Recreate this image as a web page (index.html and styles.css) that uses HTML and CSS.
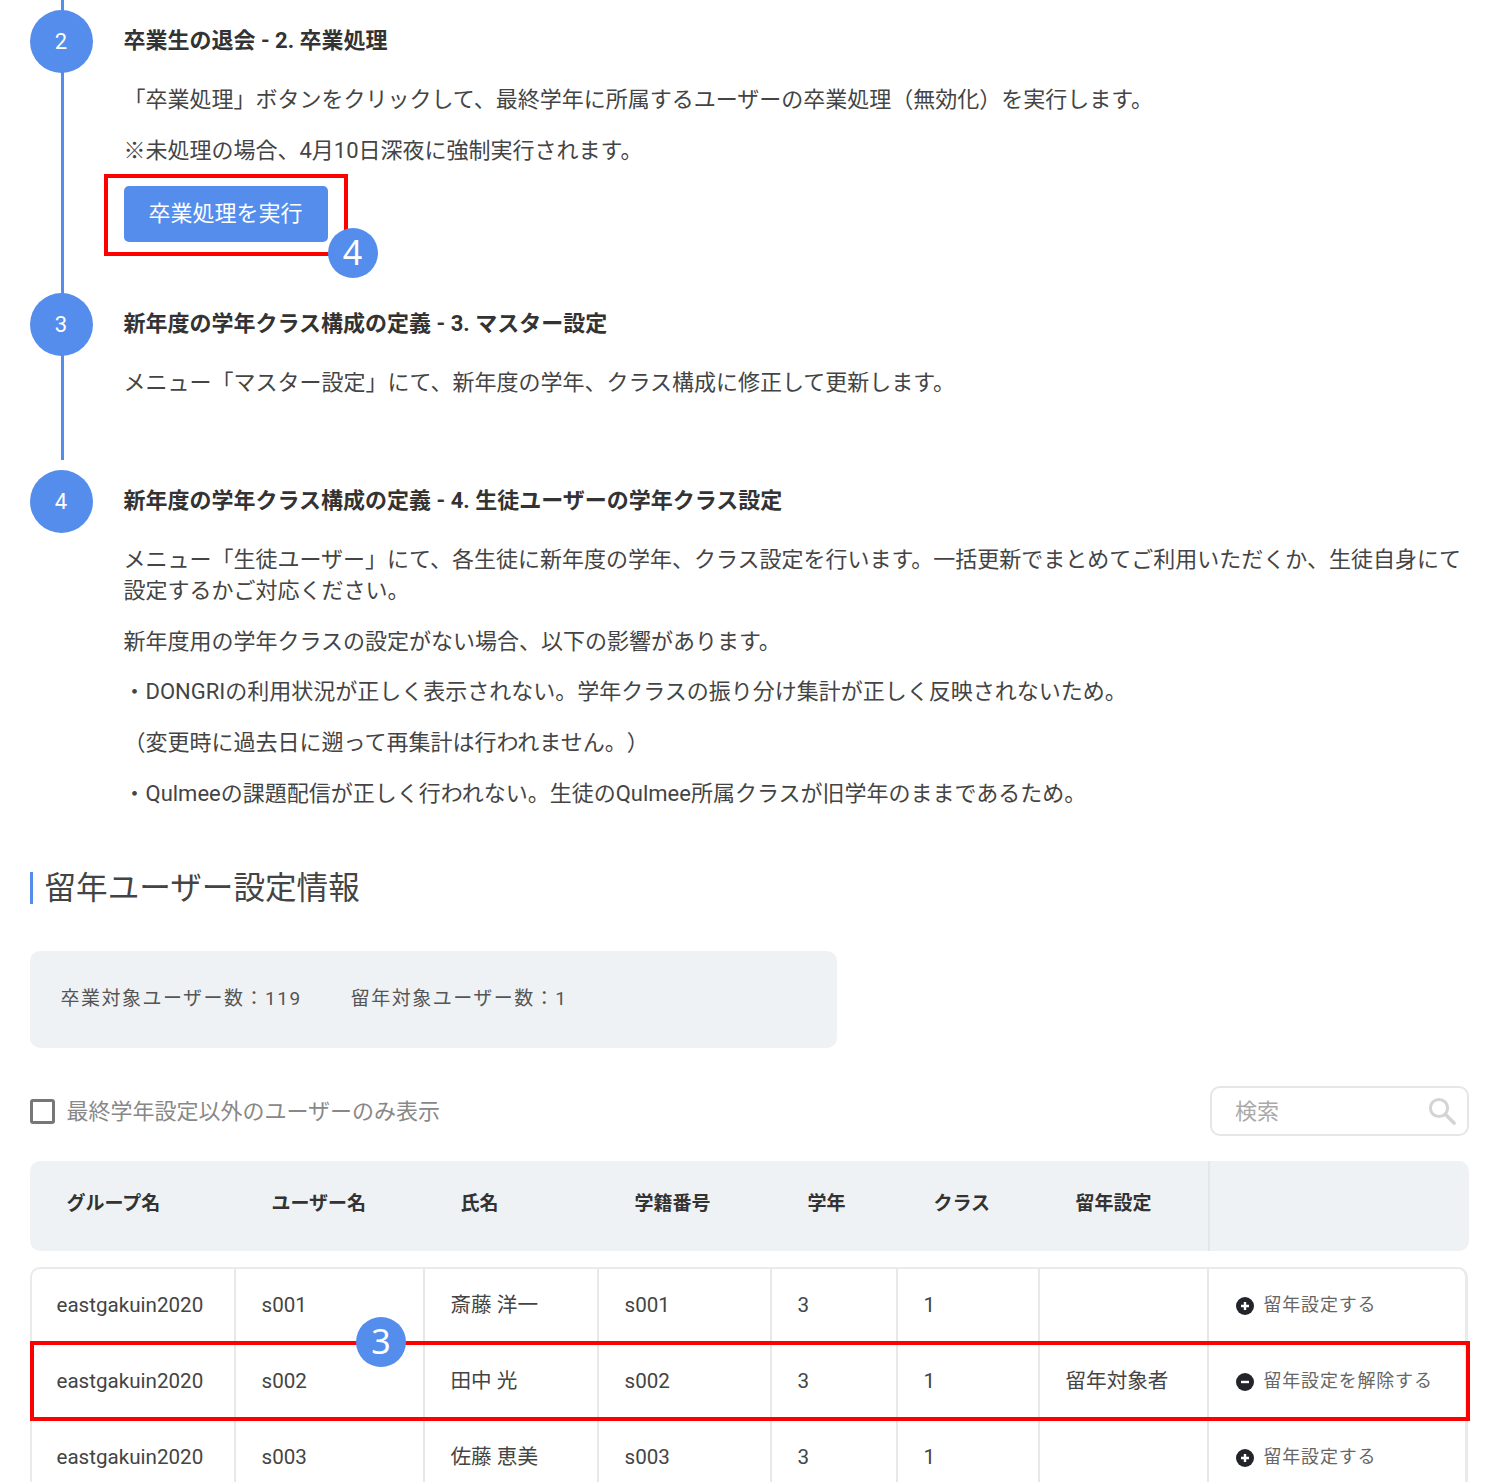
FILE: index.html
```html
<!DOCTYPE html>
<html lang="ja">
<head>
<meta charset="utf-8">
<title>卒業処理</title>
<link rel="stylesheet" href="styles.css">
</head>
<body>
<main class="page">
  <section class="timeline">
    <article class="step step-two">
      <div class="step-num">2</div>
      <div class="step-body">
        <h3 class="step-title">卒業生の退会 - 2. 卒業処理</h3>
        <p class="para">「卒業処理」ボタンをクリックして、最終学年に所属するユーザーの卒業処理（無効化）を実行します。</p>
        <p class="para">※未処理の場合、4月10日深夜に強制実行されます。</p>
        <div class="btn-wrap">
          <button class="btn-primary" type="button">卒業処理を実行</button>
          <span class="red-box red-box-btn"></span>
          <span class="badge badge-four">4</span>
        </div>
      </div>
    </article>
    <article class="step step-three">
      <div class="step-num">3</div>
      <div class="step-body">
        <h3 class="step-title">新年度の学年クラス構成の定義 - 3. マスター設定</h3>
        <p class="para">メニュー「マスター設定」にて、新年度の学年、クラス構成に修正して更新します。</p>
      </div>
    </article>
    <article class="step step-four">
      <div class="step-num">4</div>
      <div class="step-body">
        <h3 class="step-title">新年度の学年クラス構成の定義 - 4. 生徒ユーザーの学年クラス設定</h3>
        <p class="para">メニュー「生徒ユーザー」にて、各生徒に新年度の学年、クラス設定を行います。一括更新でまとめてご利用いただくか、生徒自身にて設定するかご対応ください。</p>
        <p class="para">新年度用の学年クラスの設定がない場合、以下の影響があります。</p>
        <p class="para">・DONGRIの利用状況が正しく表示されない。学年クラスの振り分け集計が正しく反映されないため。</p>
        <p class="para">（変更時に過去日に遡って再集計は行われません。）</p>
        <p class="para">・Qulmeeの課題配信が正しく行われない。生徒のQulmee所属クラスが旧学年のままであるため。</p>
      </div>
    </article>
  </section>

  <h2 class="section-title">留年ユーザー設定情報</h2>

  <div class="info-box">
    <span>卒業対象ユーザー数：119</span>
    <span>留年対象ユーザー数：1</span>
  </div>

  <div class="filter-bar">
    <label class="check-label"><span class="checkbox"></span>最終学年設定以外のユーザーのみ表示</label>
    <div class="search">
      <span class="search-text">検索</span>
      <svg class="search-icon" viewBox="0 0 28 28" aria-hidden="true"><circle cx="11" cy="11" r="8.6" fill="none" stroke="#d4d4d4" stroke-width="3"/><path d="M17.5 17.5 26 26" stroke="#d4d4d4" stroke-width="3.6" stroke-linecap="round"/></svg>
    </div>
  </div>

  <table class="head-table">
    <colgroup><col class="c1"><col class="c2"><col class="c3"><col class="c4"><col class="c5"><col class="c6"><col class="c7"><col></colgroup>
    <thead>
      <tr><th>グループ名</th><th>ユーザー名</th><th>氏名</th><th>学籍番号</th><th>学年</th><th>クラス</th><th>留年設定</th><th class="th-last"></th></tr>
    </thead>
  </table>

  <div class="body-wrap">
    <div class="body-clip">
      <table class="body-table">
        <colgroup><col class="b1"><col class="c2"><col class="c3"><col class="c4"><col class="c5"><col class="c6"><col class="c7"><col></colgroup>
        <tbody>
          <tr>
            <td>eastgakuin2020</td><td>s001</td><td>斎藤 洋一</td><td>s001</td><td>3</td><td>1</td><td></td>
            <td><span class="action"><svg class="action-icon" viewBox="0 0 18 18" aria-hidden="true"><circle cx="9" cy="9" r="9" fill="#23252a"/><path d="M9 5v8M5 9h8" stroke="#fff" stroke-width="2.4"/></svg>留年設定する</span></td>
          </tr>
          <tr>
            <td>eastgakuin2020</td><td>s002</td><td>田中 光</td><td>s002</td><td>3</td><td>1</td><td>留年対象者</td>
            <td><span class="action"><svg class="action-icon" viewBox="0 0 18 18" aria-hidden="true"><circle cx="9" cy="9" r="9" fill="#23252a"/><path d="M5 9h8" stroke="#fff" stroke-width="2.4"/></svg>留年設定を解除する</span></td>
          </tr>
          <tr>
            <td>eastgakuin2020</td><td>s003</td><td>佐藤 恵美</td><td>s003</td><td>3</td><td>1</td><td></td>
            <td><span class="action"><svg class="action-icon" viewBox="0 0 18 18" aria-hidden="true"><circle cx="9" cy="9" r="9" fill="#23252a"/><path d="M9 5v8M5 9h8" stroke="#fff" stroke-width="2.4"/></svg>留年設定する</span></td>
          </tr>
        </tbody>
      </table>
    </div>
    <span class="red-box red-box-row"></span>
    <span class="badge badge-three">3</span>
  </div>
</main>
</body>
</html>
```

FILE: styles.css
```css
* { box-sizing: border-box; }
html, body { margin: 0; height: 1482px; overflow: hidden; background: #fff; }
body {
  font-family: Roboto, "Noto Sans CJK JP", sans-serif;
  color: #444;
  font-size: 22px;
  text-spacing-trim: space-all;
}
.page { padding: 0 31px 0 29.5px; }

.step { position: relative; display: flex; padding-top: 10px; }
.step-two { height: 283px; }
.step-three { height: 177px; }
.step-two::before, .step-three::before {
  content: "";
  position: absolute;
  left: 31.5px;
  top: 0;
  bottom: 0;
  width: 3px;
  background: #558ded;
}
.step-num {
  position: relative;
  flex: none;
  width: 63px;
  height: 63px;
  margin-right: 31px;
  border-radius: 50%;
  background: #558ded;
  color: #fff;
  font-size: 22px;
  line-height: 63px;
  text-align: center;
}
.step-body { flex: 1; min-width: 0; padding-top: 15px; }
.step-title { margin: 0 0 28px; font-size: 22px; line-height: 31px; font-weight: 700; color: #333; }
.para { margin: 0 0 19.7px; font-size: 22px; line-height: 31px; color: #444; }

.btn-wrap { position: relative; width: 204px; height: 56px; margin-top: 20px; }
.btn-primary {
  display: block;
  width: 204px;
  height: 56px;
  border: 0;
  border-radius: 5px;
  background: #558ded;
  color: #fff;
  font: inherit;
  font-size: 22px;
  line-height: 55px;
  padding: 0;
}
.red-box { position: absolute; border: 4px solid #f00; pointer-events: none; }
.red-box-btn { left: -20px; top: -12px; width: 244px; height: 82px; }
.badge {
  position: absolute;
  width: 50px;
  height: 50px;
  border-radius: 50%;
  background: #558ded;
  color: #fff;
  font-family: "Noto Sans", sans-serif;
  font-size: 34px;
  line-height: 49px;
  text-align: center;
}
.badge-four { left: 204px; top: 42px; }

.section-title {
  margin: 44px 0 47px;
  height: 32px;
  padding-left: 12px;
  border-left: 3px solid #558ded;
  font-size: 31.6px;
  line-height: 33px;
  font-weight: 400;
  color: #444;
}

.info-box {
  display: flex;
  gap: 49px;
  width: 807px;
  height: 97px;
  padding: 33px 31px 0;
  border-radius: 10px;
  background: #eff2f5;
  font-size: 19px;
  line-height: 30px;
  letter-spacing: 1.5px;
  color: #555;
}

.filter-bar {
  display: flex;
  align-items: center;
  justify-content: space-between;
  height: 50px;
  margin-top: 38px;
}
.check-label { display: flex; align-items: center; gap: 12px; color: #888; font-size: 22px; line-height: 31px; }
.checkbox {
  width: 25px;
  height: 25px;
  margin-top: 1px;
  border: 3px solid #777;
  border-radius: 3px;
}
.search {
  display: flex;
  align-items: center;
  justify-content: space-between;
  width: 259px;
  height: 50px;
  padding: 0 11px 0 23px;
  border: 2px solid #e6e6e6;
  border-radius: 10px;
}
.search-text { color: #aaa; font-size: 22px; line-height: 31px; }
.search-icon { width: 28px; height: 28px; }

table { width: 100%; border-collapse: separate; border-spacing: 0; table-layout: fixed; }
.c1 { width: 205px; }
.b1 { width: 204px; }
.c2 { width: 189px; }
.c3 { width: 174px; }
.c4 { width: 173px; }
.c5 { width: 126px; }
.c6 { width: 142px; }
.c7 { width: 169px; }

.head-table { margin-top: 25px; height: 90px; background: #eff2f5; border-radius: 10px; }
.head-table th {
  padding: 0 0 4px 37px;
  text-align: left;
  font-size: 19px;
  line-height: 30px;
  font-weight: 700;
  color: #333;
}
.head-table th.th-last { border-left: 2px solid #e4e6e9; }

.body-wrap { position: relative; width: 1438.5px; margin-top: 16px; }
.body-clip {
  border: 2px solid #eaeaea;
  border-right-width: 3px;
  border-bottom: 0;
  border-radius: 10px 10px 0 0;
  overflow: hidden;
}
.body-table td {
  height: 76px;
  padding: 0 0 2px 26px;
  border-right: 2px solid #e8e8e8;
  border-bottom: 2px solid #e8e8e8;
  font-size: 20.6px;
  line-height: 30px;
  color: #444;
  white-space: nowrap;
}
.body-table td:first-child { padding-left: 25px; }
.body-table td:last-child { border-right: 0; }
.action {
  display: flex;
  align-items: center;
  gap: 10px;
  padding-left: 1px;
  font-size: 18px;
  letter-spacing: .8px;
  color: #666;
}
.action-icon { flex: none; width: 18px; height: 18px; margin-top: 2px; }
.red-box-row { left: 0; top: 74px; width: 1440.5px; height: 80px; }
.badge-three { left: 326.5px; top: 50px; }
```
